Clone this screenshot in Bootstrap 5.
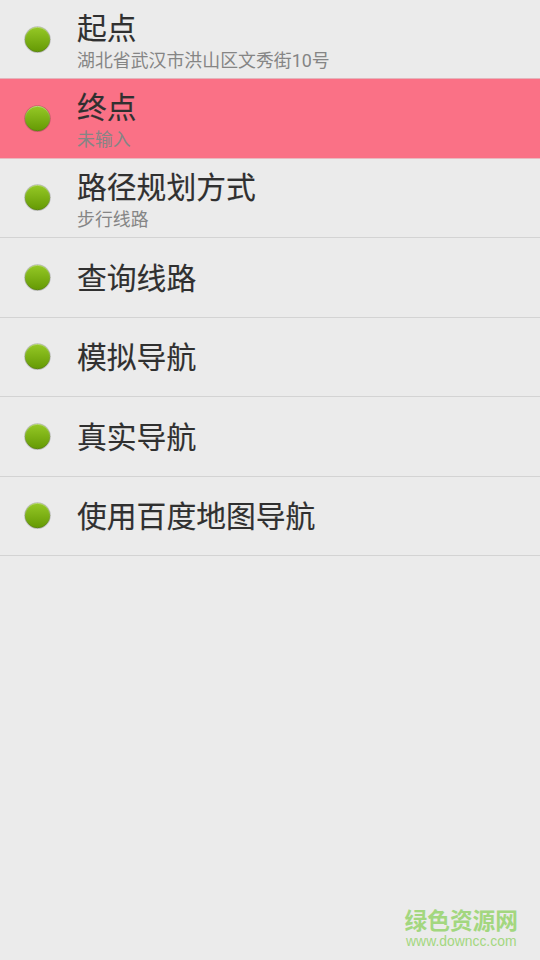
<!DOCTYPE html>
<html lang="zh-CN">
<head>
<meta charset="utf-8">
<meta name="viewport" content="width=device-width, initial-scale=1">
<title>导航</title>
<link rel="stylesheet" href="https://cdn.jsdelivr.net/npm/bootstrap@5.3.0/dist/css/bootstrap.min.css">
<style>
body{background:#ebebeb;font-family:Roboto,"Noto Sans CJK SC",sans-serif;height:960px;overflow:hidden}
.menu-row{height:79.5px;border-bottom:1px solid #d3d3d3;padding-left:24px;gap:26px}
.menu-row:first-child{height:79px}
.menu-row.chosen{background:#fa7186;border-bottom-color:#e9b9c0}
.menu-row.before-chosen{border-bottom-color:#e3b4bb}
.dot{width:27px;height:27px;flex:none}
.title{font-size:29.8px;line-height:36px;color:#303030;-webkit-text-stroke:.15px #303030;padding-top:3px}
.stacked .title{padding-top:5px}
.sub{font-size:17.9px;line-height:22px;color:#858585;margin-top:3px}
.site{color:#a3d77f;padding:0 22px 12px 0}
.site-name{font-size:22.7px;line-height:24px;font-weight:700}
.site-url{font-family:"Liberation Sans",sans-serif;font-size:13.9px;line-height:14px}
</style>
<script src="https://cdn.jsdelivr.net/npm/bootstrap@5.3.0/dist/js/bootstrap.bundle.min.js"></script>
</head>
<body class="d-flex flex-column">
<svg width="0" height="0" class="position-absolute"><defs>
<linearGradient id="g" x1="0" y1="0" x2="0" y2="1"><stop offset="0" stop-color="#95c826"/><stop offset="1" stop-color="#659a04"/></linearGradient>
<linearGradient id="rim" x1="0" y1="0" x2="0" y2="1"><stop offset="0" stop-color="#b9d877"/><stop offset=".5" stop-color="#7dab2b"/><stop offset="1" stop-color="#5c8710"/></linearGradient>
<symbol id="ball" viewBox="0 0 27 27"><circle cx="13.5" cy="13.6" r="13.3" fill="#000" opacity=".2"/><circle cx="13.5" cy="13.5" r="12.2" fill="url(#g)" stroke="url(#rim)" stroke-width="1"/></symbol>
</defs></svg>
<main>
<div class="menu-row before-chosen stacked d-flex align-items-center"><svg class="dot"><use href="#ball"/></svg><div><div class="title">起点</div><div class="sub">湖北省武汉市洪山区文秀街10号</div></div></div>
<div class="menu-row chosen stacked d-flex align-items-center"><svg class="dot"><use href="#ball"/></svg><div><div class="title">终点</div><div class="sub">未输入</div></div></div>
<div class="menu-row stacked d-flex align-items-center"><svg class="dot"><use href="#ball"/></svg><div><div class="title">路径规划方式</div><div class="sub">步行线路</div></div></div>
<div class="menu-row d-flex align-items-center"><svg class="dot"><use href="#ball"/></svg><div class="title">查询线路</div></div>
<div class="menu-row d-flex align-items-center"><svg class="dot"><use href="#ball"/></svg><div class="title">模拟导航</div></div>
<div class="menu-row d-flex align-items-center"><svg class="dot"><use href="#ball"/></svg><div class="title">真实导航</div></div>
<div class="menu-row d-flex align-items-center"><svg class="dot"><use href="#ball"/></svg><div class="title">使用百度地图导航</div></div>
</main>
<footer class="site mt-auto ms-auto text-center"><div class="site-name">绿色资源网</div><div class="site-url">www.downcc.com</div></footer>
</body>
</html>
